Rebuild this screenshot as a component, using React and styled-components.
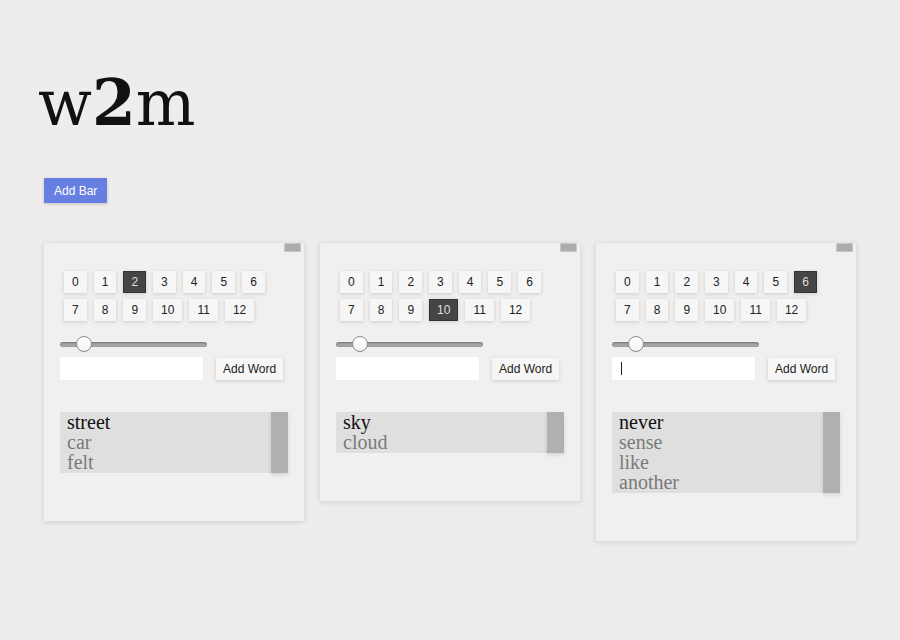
import React from 'react';
import styled, { createGlobalStyle } from 'styled-components';

const GlobalStyle = createGlobalStyle`
  body {
    margin: 0;
    background: #eeedeb;
    font-family: "Liberation Sans", Arial, sans-serif;
  }
`;

const Page = styled.div`
  padding: 72px 44px 40px;
`;

const Logo = styled.h1`
  margin: 0 0 0 -6px;
  height: 62px;
  font-family: "DejaVu Serif", Georgia, serif;
  font-weight: normal;
  font-size: 63px;
  line-height: 62px;
  color: #111;

  b {
    font-weight: bold;
  }
`;

const AddBarButton = styled.button`
  margin-top: 44px;
  height: 25px;
  padding: 0 10px;
  border: none;
  background: #667fe1;
  color: #fff;
  font-family: "Liberation Sans", Arial, sans-serif;
  font-size: 12px;
  box-shadow: 0 1px 3px rgba(0, 0, 0, 0.2);
  cursor: pointer;
`;

const Bars = styled.div`
  display: flex;
  align-items: flex-start;
  gap: 16px;
  margin-top: 40px;
`;

const Card = styled.div`
  position: relative;
  width: 260px;
  box-sizing: border-box;
  padding: 28px 16px 48px;
  background: #f1f0ef;
  box-shadow: 0 1px 6px rgba(0, 0, 0, 0.14);
`;

const CloseTab = styled.div`
  position: absolute;
  top: 0;
  right: 3px;
  width: 17px;
  height: 9px;
  box-sizing: border-box;
  background: #acacac;
  border: 1px solid #c8c8c8;
`;

const NumberGrid = styled.div`
  display: flex;
  flex-wrap: wrap;
  gap: 6px 7px;
  margin: 0 4px;
`;

const NumberButton = styled.button`
  height: 22px;
  min-width: 22px;
  box-sizing: border-box;
  padding: 0 7px;
  border: 1px solid ${p => (p.$active ? '#333' : 'transparent')};
  background: ${p => (p.$active ? '#454545' : '#f6f6f6')};
  color: ${p => (p.$active ? '#ddd' : '#222')};
  font-family: "Liberation Sans", Arial, sans-serif;
  font-size: 12px;
  box-shadow: 0 1px 4px rgba(0, 0, 0, 0.16);
  cursor: pointer;
`;

const Slider = styled.input`
  -webkit-appearance: none;
  appearance: none;
  display: block;
  width: 147px;
  height: 16px;
  margin: 15px 0 0;
  background: transparent;

  &::-webkit-slider-runnable-track {
    height: 5px;
    border-radius: 3px;
    background: linear-gradient(#8e8e8e, #b4b4b4);
    box-shadow: inset 0 0 0 1px rgba(0, 0, 0, 0.12);
  }

  &::-webkit-slider-thumb {
    -webkit-appearance: none;
    width: 16px;
    height: 16px;
    margin-top: -5.5px;
    border-radius: 50%;
    box-sizing: border-box;
    background: linear-gradient(#ffffff, #f2f2f2);
    border: 1px solid #8a8a8a;
  }
`;

const WordRow = styled.div`
  display: flex;
  align-items: center;
  gap: 13px;
  margin-top: 5px;
`;

const InputWrap = styled.div`
  position: relative;
`;

const WordInput = styled.input`
  display: block;
  width: 143px;
  height: 23px;
  box-sizing: border-box;
  border: none;
  outline: none;
  padding: 0 8px;
  background: #fff;
  font-family: "Liberation Sans", Arial, sans-serif;
  font-size: 13px;
`;

const Caret = styled.span`
  position: absolute;
  left: 9px;
  top: 5px;
  width: 1px;
  height: 13px;
  background: #222;
`;

const AddWordButton = styled.button`
  height: 22px;
  padding: 0 7px;
  border: none;
  background: #f6f6f6;
  color: #222;
  font-family: "Liberation Sans", Arial, sans-serif;
  font-size: 12px;
  box-shadow: 0 1px 4px rgba(0, 0, 0, 0.16);
  cursor: pointer;
`;

const WordList = styled.div`
  display: flex;
  margin-top: 32px;
  background: #dfdfdf;
`;

const Words = styled.ul`
  flex: 1;
  margin: 0;
  padding: 0 0 1px 7px;
  list-style: none;
`;

const Word = styled.li`
  font-family: "Liberation Serif", "DejaVu Serif", serif;
  font-size: 20px;
  line-height: 20px;
  color: ${p => (p.$first ? '#111' : '#7a7a7a')};
`;

const ListHandle = styled.div`
  width: 17px;
  background: #b0b0b0;
  box-shadow: 0 2px 4px rgba(0, 0, 0, 0.12);
`;

const numbers = Array.from({ length: 13 }, (_, i) => i);

const bars = [
  { id: 1, active: 2, words: ['street', 'car', 'felt'] },
  { id: 2, active: 10, words: ['sky', 'cloud'] },
  { id: 3, active: 6, words: ['never', 'sense', 'like', 'another'], focused: true },
];

const Bar = ({ bar }) => (
  <Card>
    <CloseTab />
    <NumberGrid>
      {numbers.map(n => (
        <NumberButton key={n} $active={n === bar.active}>
          {n}
        </NumberButton>
      ))}
    </NumberGrid>
    <Slider type="range" min="0" max="100" defaultValue="12" />
    <WordRow>
      <InputWrap>
        <WordInput type="text" />
        {bar.focused && <Caret />}
      </InputWrap>
      <AddWordButton>Add Word</AddWordButton>
    </WordRow>
    <WordList>
      <Words>
        {bar.words.map((w, i) => (
          <Word key={w} $first={i === 0}>
            {w}
          </Word>
        ))}
      </Words>
      <ListHandle />
    </WordList>
  </Card>
);

export default function App() {
  return (
    <Page>
      <GlobalStyle />
      <Logo>
        w<b>2</b>m
      </Logo>
      <AddBarButton>Add Bar</AddBarButton>
      <Bars>
        {bars.map(bar => (
          <Bar key={bar.id} bar={bar} />
        ))}
      </Bars>
    </Page>
  );
}
